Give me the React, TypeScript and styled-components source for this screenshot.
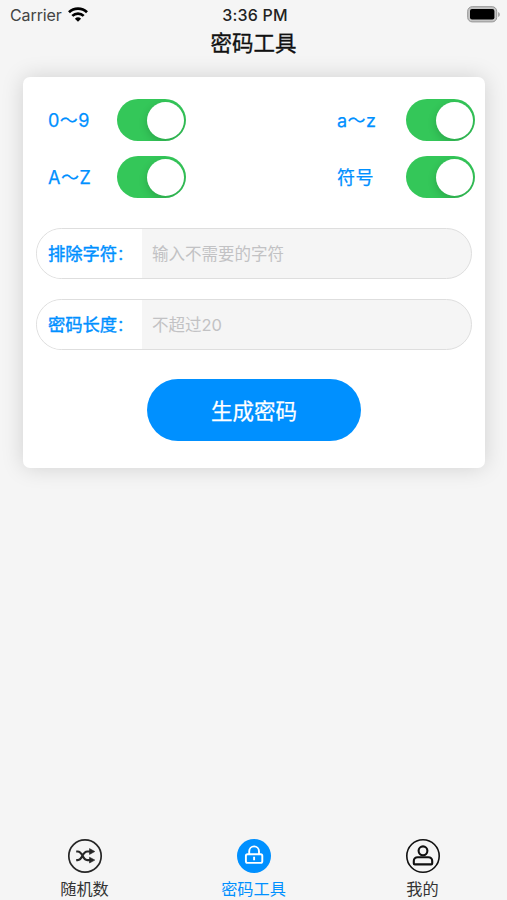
import React, { useState } from "react";
import styled, { createGlobalStyle } from "styled-components";

const BLUE = "#0090ff";

const GlobalStyle = createGlobalStyle`
  * { box-sizing: border-box; }
  body {
    margin: 0;
    background: #f5f5f5;
    font-family: Inter, "Noto Sans CJK SC", sans-serif;
    color: #1c1c1c;
  }
  button, input { font: inherit; border: 0; padding: 0; background: none; }
`;

const Screen = styled.div`
  display: flex;
  flex-direction: column;
  width: 507px;
  height: 900px;
  overflow: hidden;
`;

const StatusBar = styled.header`
  display: grid;
  grid-template-columns: 1fr auto 1fr;
  align-items: center;
  height: 30px;
  padding: 0 7px 0 10px;
  flex: none;
`;

const Carrier = styled.div`
  display: flex;
  align-items: center;
  gap: 6px;
  font-size: 16px;
  letter-spacing: -0.1px;
  color: #444;
`;

const WifiIcon = styled.svg`
  margin-bottom: 2px;
`;

const Clock = styled.time`
  font-size: 16px;
  font-weight: 500;
  letter-spacing: 0.2px;
  color: #222;
`;

const Battery = styled.svg`
  justify-self: end;
  margin-bottom: 2px;
`;

const Title = styled.h1`
  flex: none;
  margin: 0;
  height: 47px;
  font-size: 21.5px;
  line-height: 27px;
  font-weight: 400;
  -webkit-text-stroke: 0.35px currentColor;
  text-align: center;
  color: #111;
`;

const Card = styled.main`
  flex: none;
  width: 462px;
  height: 391px;
  margin-left: 23px;
  padding: 22px 13px 0;
  border-radius: 7px;
  background: #fff;
  box-shadow: 0 0 22px rgba(0, 0, 0, 0.15);
`;

const Options = styled.div`
  display: grid;
  grid-template-columns: 289px 138px;
  row-gap: 15px;
  padding-left: 12px;
`;

const Option = styled.div`
  display: flex;
  align-items: center;
  height: 42px;
`;

const OptionLabel = styled.span`
  width: 69px;
  padding-bottom: 2px;
  font-size: 18px;
  letter-spacing: 0.5px;
  -webkit-text-stroke: 0.25px currentColor;
  white-space: nowrap;
  color: ${BLUE};
`;

const Switch = styled.button<{ $on: boolean }>`
  display: flex;
  justify-content: ${(p) => (p.$on ? "flex-end" : "flex-start")};
  align-items: center;
  width: 69px;
  height: 42px;
  padding: 0 2.5px;
  border-radius: 21px;
  overflow: hidden;
  background: ${(p) => (p.$on ? "#34c759" : "#e5e5ea")};
`;

const Knob = styled.span`
  width: 37px;
  height: 37px;
  border-radius: 50%;
  background: #fff;
  box-shadow: 0 3px 8px rgba(0, 0, 0, 0.17);
`;

const Fields = styled.div`
  display: grid;
  gap: 20.5px;
  margin-top: 30px;
`;

const Field = styled.label`
  display: flex;
  width: 436px;
  height: 50.5px;
  border: 1.5px solid #dedede;
  border-radius: 26px;
  overflow: hidden;
  background: #f5f5f5;
`;

const FieldLabel = styled.span`
  display: flex;
  align-items: center;
  width: 105px;
  padding: 0 0 1px 11px;
  font-size: 17.3px;
  -webkit-text-stroke: 0.4px currentColor;
  white-space: nowrap;
  background: #fff;
  color: ${BLUE};
`;

const Colon = styled.span`
  font-size: 14px;
`;

const FieldInput = styled.input`
  flex: 1;
  min-width: 0;
  padding: 2px 0 0 10px;
  font-size: 16.5px;
  outline: 0;
  &::placeholder { color: #c2c2c4; opacity: 1; }
`;

const Generate = styled.button`
  display: block;
  width: 214px;
  height: 62px;
  margin: 29.5px auto 0 111px;
  padding-bottom: 2px;
  border-radius: 31px;
  font-size: 21.5px;
  -webkit-text-stroke: 0.25px currentColor;
  background: ${BLUE};
  color: #fff;
`;

const TabBar = styled.nav`
  display: grid;
  grid-template-columns: repeat(3, 1fr);
  height: 62px;
  margin-top: auto;
  flex: none;
`;

const Tab = styled.button<{ $active: boolean }>`
  display: flex;
  flex-direction: column;
  align-items: center;
  font-size: 16.2px;
  line-height: 24px;
  color: ${(p) => (p.$active ? BLUE : "#333")};
`;

const TabIcon = styled.svg`
  flex: none;
  width: 36px;
  height: 36px;
  margin-bottom: 3px;
  fill: none;
  stroke-linejoin: round;
`;

const ShuffleIcon = () => (
  <TabIcon viewBox="0 0 36 36" stroke="#262626">
    <circle cx="18" cy="18" r="16.2" strokeWidth="1.7" />
    <path d="M9.2 13.5h1.5c5.4 0 4.2 8.6 9.6 8.6h3M9.2 22.1h1.5c5.4 0 4.2-8.6 9.6-8.6h3" strokeWidth="2.2" />
    <path d="m22.5 10.6 5.3 2.9-5.3 2.9zM22.5 19.2l5.3 2.9-5.3 2.9z" fill="#262626" strokeWidth=".6" />
  </TabIcon>
);

const LockIcon = () => (
  <TabIcon viewBox="0 0 36 36" stroke="#fff">
    <circle cx="18" cy="18" r="17" fill={BLUE} stroke="none" />
    <rect x="9.9" y="16.2" width="16.4" height="8.7" rx="1.6" strokeWidth="1.9" />
    <path d="M13.2 16v-2.7a4.9 4.9 0 0 1 9.8 0V16M18.1 18.8v3.5" strokeWidth="1.9" />
  </TabIcon>
);

const ProfileIcon = () => (
  <TabIcon viewBox="0 0 36 36" stroke="#111">
    <circle cx="18" cy="18" r="16.2" strokeWidth="1.6" />
    <circle cx="18" cy="12.8" r="4.4" strokeWidth="2.1" />
    <path d="M12.6 19.2a3.8 3.8 0 0 0-3.8 3.8v2.4a1 1 0 0 0 1 1h16.4a1 1 0 0 0 1-1V23a3.800 3.800 0 0 0-3.800-3.800Z" strokeWidth="2.1" />
  </TabIcon>
);

const OPTIONS = ["0～9", "a～z", "A～Z", "符号"];

const FIELDS = [
  { label: "排除字符", hint: "输入不需要的字符" },
  { label: "密码长度", hint: "不超过20" },
];

const TABS = [
  { label: "随机数", Icon: ShuffleIcon },
  { label: "密码工具", Icon: LockIcon },
  { label: "我的", Icon: ProfileIcon },
];

export default function App() {
  const [enabled, setEnabled] = useState(OPTIONS.map(() => true));
  const toggle = (index: number) =>
    setEnabled((current) => current.map((on, i) => (i === index ? !on : on)));

  return (
    <>
      <GlobalStyle />
      <Screen>
        <StatusBar>
          <Carrier>
            Carrier
            <WifiIcon width="20" height="15" viewBox="0 0 20 15" fill="none" stroke="#000" strokeWidth="2.7">
              <path d="M1 5.3a12.8 12.8 0 0 1 18 0M4.3 8.9a8.2 8.2 0 0 1 11.4 0" />
              <path d="M10 14.8 6.9 11.7a4.5 4.5 0 0 1 6.2 0Z" fill="#000" stroke="none" />
            </WifiIcon>
          </Carrier>
          <Clock>3:36 PM</Clock>
          <Battery width="33" height="17" viewBox="0 0 33 17">
            <rect x=".7" y=".7" width="29" height="15.2" rx="4.5" fill="#c4c4c4" stroke="#969696" />
            <rect x="3" y="3" width="24.4" height="10.6" rx="2" fill="#000" />
            <path d="M31.2 6v5c2.1-1 2.1-4 0-5Z" fill="#999" />
          </Battery>
        </StatusBar>
        <Title>密码工具</Title>
        <Card>
          <Options>
            {OPTIONS.map((label, i) => (
              <Option key={label}>
                <OptionLabel>{label}</OptionLabel>
                <Switch
                  $on={enabled[i]}
                  role="switch"
                  aria-checked={enabled[i]}
                  aria-label={label}
                  onClick={() => toggle(i)}
                >
                  <Knob />
                </Switch>
              </Option>
            ))}
          </Options>
          <Fields>
            {FIELDS.map(({ label, hint }) => (
              <Field key={label}>
                <FieldLabel>
                  {label}
                  <Colon>：</Colon>
                </FieldLabel>
                <FieldInput placeholder={hint} />
              </Field>
            ))}
          </Fields>
          <Generate>生成密码</Generate>
        </Card>
        <TabBar>
          {TABS.map(({ label, Icon }, i) => (
            <Tab key={label} $active={i === 1}>
              <Icon />
              {label}
            </Tab>
          ))}
        </TabBar>
      </Screen>
    </>
  );
}
